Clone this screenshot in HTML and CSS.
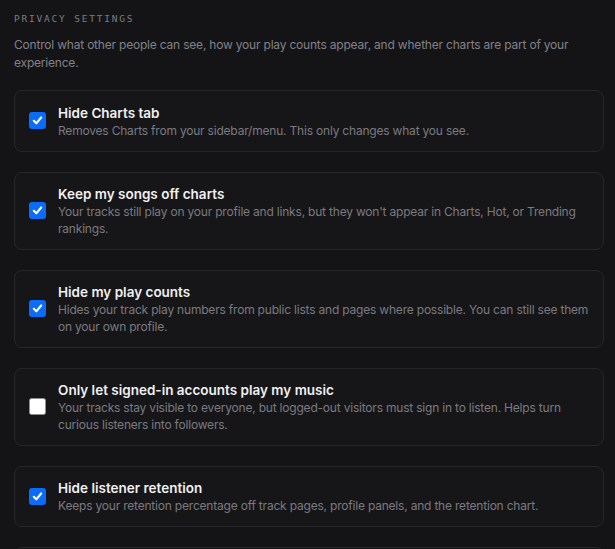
FILE: index.html
```html
<!DOCTYPE html>
<html lang="en">
<head>
<meta charset="utf-8">
<title>Privacy settings</title>
<link rel="stylesheet" href="styles.css">
</head>
<body>
<section class="privacy">
  <h2 class="section-label">Privacy settings</h2>
  <p class="section-intro">Control what other people can see, how your play counts appear, and whether charts are part of your experience.</p>

  <div class="options">
    <label class="option">
      <span class="box checked"><svg viewBox="0 0 18 18"><path d="M4.6 9.4l3 3 5.8-7"/></svg></span>
      <span class="text">
        <span class="title">Hide Charts tab</span>
        <span class="desc">Removes Charts from your sidebar/menu. This only changes what you see.</span>
      </span>
    </label>

    <label class="option">
      <span class="box checked"><svg viewBox="0 0 18 18"><path d="M4.6 9.4l3 3 5.8-7"/></svg></span>
      <span class="text">
        <span class="title">Keep my songs off charts</span>
        <span class="desc">Your tracks still play on your profile and links, but they won't appear in Charts, Hot, or Trending rankings.</span>
      </span>
    </label>

    <label class="option">
      <span class="box checked"><svg viewBox="0 0 18 18"><path d="M4.6 9.4l3 3 5.8-7"/></svg></span>
      <span class="text">
        <span class="title">Hide my play counts</span>
        <span class="desc">Hides your track play numbers from public lists and pages where possible. You can still see them on your own profile.</span>
      </span>
    </label>

    <label class="option">
      <span class="box"></span>
      <span class="text">
        <span class="title">Only let signed-in accounts play my music</span>
        <span class="desc">Your tracks stay visible to everyone, but logged-out visitors must sign in to listen. Helps turn curious listeners into followers.</span>
      </span>
    </label>

    <label class="option">
      <span class="box checked"><svg viewBox="0 0 18 18"><path d="M4.6 9.4l3 3 5.8-7"/></svg></span>
      <span class="text">
        <span class="title">Hide listener retention</span>
        <span class="desc">Keeps your retention percentage off track pages, profile panels, and the retention chart.</span>
      </span>
    </label>

    <label class="option">
      <span class="box"></span>
      <span class="text">
        <span class="title">&nbsp;</span>
        <span class="desc">&nbsp;</span>
      </span>
    </label>
  </div>
</section>
</body>
</html>
```

FILE: styles.css
```css
html, body {
  margin: 0;
  padding: 0;
  background: #141416;
  height: 100%;
  overflow: hidden;
}

body {
  font-family: Inter, "Noto Sans", sans-serif;
  color: #ececee;
}

.privacy {
  padding: 12px 11px 0 14px;
}

.section-label {
  margin: 0;
  font-family: "DejaVu Sans Mono", "Liberation Mono", monospace;
  font-size: 9.5px;
  font-weight: 400;
  letter-spacing: 1.8px;
  text-transform: uppercase;
  color: #7c7c82;
  line-height: 14px;
}

.section-intro {
  margin: 10px 0 0;
  font-size: 12px;
  letter-spacing: -0.2px;
  line-height: 18px;
  color: #818188;
}

.options {
  margin-top: 18px;
  display: flex;
  flex-direction: column;
  gap: 20px;
}

.option {
  display: flex;
  align-items: center;
  gap: 12px;
  padding: 11.5px 14px 11.5px 14px;
  border: 1px solid #26262a;
  border-radius: 8px;
  background: #161618;
}

.box {
  flex: none;
  width: 17px;
  height: 17px;
  border-radius: 2.5px;
  background: #ffffff;
  border: 1px solid #8d8d92;
  box-sizing: border-box;
  display: flex;
  align-items: center;
  justify-content: center;
}

.box.checked {
  background: #0b6cf7;
  border-color: #0b6cf7;
}

.box svg {
  width: 17px;
  height: 17px;
  fill: none;
  stroke: #ffffff;
  stroke-width: 2.6;
  stroke-linecap: round;
  stroke-linejoin: round;
}

.text {
  display: flex;
  flex-direction: column;
  min-width: 0;
}

.title {
  font-size: 13.5px;
  font-weight: 600;
  line-height: 20px;
  color: #f0f0f2;
}

.desc {
  font-size: 12px;
  letter-spacing: -0.2px;
  line-height: 16.5px;
  color: #7a7a80;
}
```
